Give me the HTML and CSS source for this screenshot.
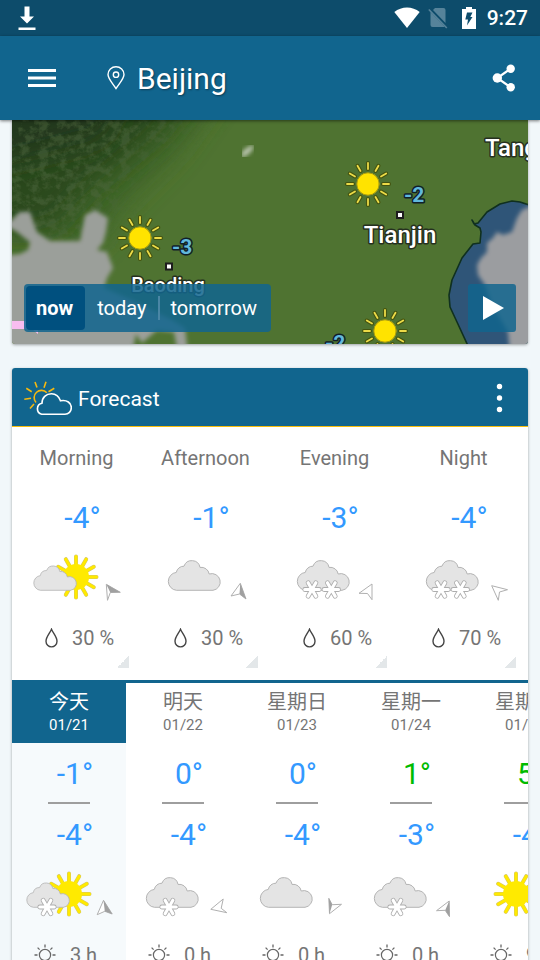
FILE: index.html
```html
<!DOCTYPE html>
<html lang="en">
<head>
<meta charset="utf-8">
<meta name="viewport" content="width=device-width, initial-scale=1">
<title>Beijing</title>
<link rel="stylesheet" href="styles.css">
</head>
<body>
<svg class="defs" width="0" height="0" aria-hidden="true">
  <defs>
    <path id="cloud" d="M19.5 38.3A9 9 0 0 1 19.3 20.4A7.6 7.6 0 0 1 27 14.2A8.3 8.3 0 0 1 43 15.4A8 8 0 0 1 52.2 22A8.4 8.4 0 1 1 56 38.3Z" fill="#e4e4e4" stroke="#b4b4b4"/>
    <use id="small-cloud" href="#cloud" transform="translate(-3.5 6.9) scale(.82)"/>
    <path id="rays" d="M0-11V-20.5M0 11V20.5M-11 0H-20.5M11 0H20.5M5.5-9.5L10.2-17.8M-5.5-9.5L-10.2-17.8M5.5 9.5L10.2 17.8M-5.5 9.5L-10.2 17.8M9.5-5.5L17.8-10.2M-9.5-5.5L-17.8-10.2M9.5 5.5L17.8 10.2M-9.5 5.5L-17.8 10.2"/>
    <g id="sun" stroke-linecap="round">
      <use href="#rays" stroke="#d3c56a" stroke-width="4"/>
      <circle r="13" fill="#ffea00"/>
      <use href="#rays" stroke="#ffea00" stroke-width="3"/>
    </g>
    <path id="arms" d="M-7.2 0H7.2M-3.9-6.7L3.9 6.7M3.9-6.7L-3.9 6.7"/>
    <g id="flake">
      <use href="#arms" stroke="#adadad" stroke-width="4.8" stroke-linecap="round"/>
      <use href="#arms" stroke="#fff" stroke-width="3.2" stroke-linecap="round"/>
    </g>
    <symbol id="drop" viewBox="0 0 13 20">
      <path d="M6.5 1.2C8 5 12 8.8 12 13.2A5.5 5.7 0 0 1 1 13.2C1 8.8 5 5 6.5 1.2Z" fill="none" stroke="#444" stroke-width="1.4"/>
    </symbol>
    <symbol id="hours" viewBox="0 0 22 22">
      <circle cx="11" cy="11" r="5.6" fill="none" stroke="#666" stroke-width="1.2"/>
      <path d="M11 .5V3.5M11 18.5V21.5M.5 11H3.5M18.5 11H21.5M3.6 3.6L5.6 5.6M16.4 16.4L18.4 18.4M18.4 3.6L16.4 5.6M3.6 18.4L5.6 16.4" stroke="#666" stroke-width="1.3"/>
    </symbol>
    <path id="map-rays" d="M0-15V-21M0 15V21M-15 0H-21M15 0H21M7.5-13L10.5-18.2M-7.5-13L-10.5-18.2M7.5 13L10.5 18.2M-7.5 13L-10.5 18.2M13-7.5L18.2-10.5M-13-7.5L-18.2-10.5M13 7.5L18.2 10.5M-13 7.5L-18.2 10.5"/>
    <g id="map-sun" stroke-linecap="round">
      <use href="#map-rays" stroke="#44540f" stroke-width="4"/>
      <use href="#map-rays" stroke="#ecdb48" stroke-width="1.8"/>
      <circle r="11.2" fill="#ffe300" stroke="#a99b10"/>
    </g>
  </defs>
</svg>

<div class="screen">
  <div class="status">
    <svg width="18" height="24" viewBox="0 0 18 24" fill="#fff"><path d="M6.5 .5H11.500V10.500H16L9 17.500L2 10.500H6.500ZM.5 21.500H17.500V24H.5Z"/></svg>
    <div class="status-right">
      <svg width="26" height="22" viewBox="0 0 26 22"><path d="M.3 5C7.500-1 18.500-1 25.700 5L13 21Z" fill="#fff"/></svg>
      <svg class="sim" width="20" height="22" viewBox="0 0 20 22"><path d="M7 1H15.500Q17.500 1 17.500 3V16L5 3ZM2.500 5L16.500 19.500Q16 20 15.500 20H4.500Q2.500 20 2.500 18Z" fill="#56839a"/><path d="M.8 2.500L18.800 21" stroke="#56839a" stroke-width="1.600"/></svg>
      <svg class="battery" width="14" height="22" viewBox="0 0 14 22"><path d="M4 0H10V2H14V22H0V2H4Z" fill="#fff"/><path d="M5 5.500H10.500L8.300 10H10.500L5 18.500L6 12.500H3.300Z" fill="#0d4c6b"/></svg>
      <span class="clock">9:27</span>
    </div>
  </div>

  <header class="appbar">
    <button class="icon-btn" aria-label="Menu"><svg width="28" height="18" viewBox="0 0 28 18" fill="#fff"><path d="M0 0H28V3H0ZM0 7.500H28V10.500H0ZM0 15H28V18H0Z"/></svg></button>
    <div class="place">
      <svg width="18" height="24" viewBox="0 0 18 24" fill="none" stroke="#fff" stroke-width="1.400"><path d="M9 22.500C5 16.500 1 12.500 1 8.500A8 7.800 0 0 1 17 8.500C17 12.500 13 16.500 9 22.500Z"/><circle cx="9" cy="8.700" r="2.700"/></svg>
      <h1>Beijing</h1>
    </div>
    <button class="icon-btn share" aria-label="Share"><svg width="24" height="28" viewBox="0 0 24 28"><path d="M18.700 4.700L5.300 14L18.700 23.300" fill="none" stroke="#fff" stroke-width="2.200"/><g fill="#fff"><circle cx="18.700" cy="4.700" r="4.200"/><circle cx="5.300" cy="14" r="4.700"/><circle cx="18.700" cy="23.300" r="4.200"/></g></svg></button>
  </header>

  <main>
    <section class="card map">
      <svg class="map-art" viewBox="0 0 516 224" preserveAspectRatio="xMidYMid slice">
        <defs>
          <filter id="soft" x="-10%" y="-10%" width="120%" height="120%"><feGaussianBlur stdDeviation="2.2"/></filter>
          <filter id="haze" x="-30%" y="-30%" width="160%" height="160%"><feGaussianBlur stdDeviation="14"/></filter>
          <filter id="grain" x="-20%" y="-20%" width="140%" height="140%">
            <feGaussianBlur in="SourceGraphic" stdDeviation="14" result="area"/>
            <feTurbulence type="fractalNoise" baseFrequency=".11 .13" numOctaves="5" seed="9"/>
            <feColorMatrix values="0 0 0 0 .08  0 0 0 0 .14  0 0 0 0 .05  0 0 0 4 -1.7"/>
            <feComposite in2="area" operator="in"/>
          </filter>
        </defs>
        <rect width="516" height="224" fill="#4f7331"/>
        <path d="M-40-40H215L165 30L135 60L110 85L85 125H-40Z" fill="#3c6427" filter="url(#haze)"/>
        <path d="M-40-40H190L145 14L110 42L75 70L40 110H-40Z" fill="#2c4a1d" filter="url(#haze)"/>
        <path d="M-40-40H120L90 18L30 34L-40 50Z" fill="#22391a" filter="url(#haze)"/>
        <path d="M-20-20H200L155 25L118 55L100 95L80 120H-20Z" filter="url(#grain)" opacity=".5"/>
        <path d="M231 33L234 30L241 26L237 32L231 36Z" fill="#b9c4ae" stroke="#b9c4ae" stroke-width="3" filter="url(#soft)"/>
        <path d="M-9 104L0 100L8 92L18 92L25 112L38 121H68L73 95L83 90L96 98L94 112L91 123L85 130L95 132L101 148L95 158L92 168L120 180L160 200L173 208L176 234H166L162 212L145 210L130 223L124 214L120 234H-9V136L8 134L16 130L18 122L5 112Z" fill="#9b9f9a" filter="url(#soft)"/>
        <path d="M0 201H26V214L20 209H0Z" fill="#f8bdf0"/>
        <path d="M520 86L508 82L500 81L488 84L475 92L466 103L462 104L460 100L463 105L468 108L469 112L468 123L461 124L450 138L440 160L437 175L438 187L445 202L457 228H520Z" fill="#2f5578" stroke="#10301f" stroke-width="1.6" stroke-linejoin="round"/>
        <path d="M525 84L510 90L505 98L500 112L491 115L485 112L481 118L475 123V132L469 138L465 145L466 155L473 165L480 185L492 205L496 212L498 234H525Z" fill="#9b9da0" filter="url(#soft)"/>
        <use href="#map-sun" x="128" y="118"/>
        <use href="#map-sun" x="356" y="64"/>
        <use href="#map-sun" x="373" y="211"/>
        <g fill="#fff" stroke="#1d1d1d" stroke-width="2"><path d="M154 143.500H160V149.500H154ZM385 92H391V98H385Z"/></g>
        <g class="map-city">
          <text x="388" y="123" text-anchor="middle">Tianjin</text>
          <text x="473" y="36">Tang</text>
          <text class="minor" x="156" y="172" text-anchor="middle">Baoding</text>
        </g>
        <g class="map-temp">
          <text x="160" y="134">-3</text>
          <text x="392" y="82">-2</text>
          <text x="313" y="230">-2</text>
        </g>
      </svg>
      <div class="map-bar">
        <div class="segments">
          <button class="on">now</button>
          <button>today</button>
          <button>tomorrow</button>
        </div>
        <button class="play" aria-label="Play"><svg width="22" height="24" viewBox="0 0 22 24"><path d="M0 0L21 12L0 24Z" fill="#fff"/></svg></button>
      </div>
    </section>

    <section class="card">
      <div class="card-head">
        <svg width="48" height="38" viewBox="0 0 48 38" fill="none" stroke-width="1.6"><path stroke="#f6b90f" d="M12 23.500A7 7 0 1 1 22.800 13.800M11 3L13 8.500M22 2.700L20 8.700M30.300 9.300L24.500 12.700M2.300 9.300L7.700 12.700M.3 20.300L7 19.300M6 29.500L10 25"/><path stroke="#fff" d="M17.700 35.300A5.700 5.700 0 0 1 18 24.200C18 18.500 22 14.700 27.500 14.700C32 14.700 35 17.500 36.500 21.800C43 20.500 47.300 24 47.300 28.500C47.300 32.500 44.500 35.300 41 35.300Z"/></svg>
        <h2>Forecast</h2>
        <button class="icon-btn more" aria-label="More"><svg width="12" height="30" viewBox="0 0 12 30" fill="#fff"><circle cx="6.500" cy="3.500" r="2.700"/><circle cx="6.500" cy="15" r="2.700"/><circle cx="6.500" cy="26.500" r="2.700"/></svg></button>
      </div>

      <div class="periods">
        <div class="period">
          <h3>Morning</h3>
          <p class="temp">-4°</p>
          <svg class="weather" viewBox="0 0 97 54"><use href="#sun" x="48" y="25"/><use href="#small-cloud"/><path class="wind" d="M78.300 32.300L92.300 40.300L82.300 40.500L79.500 48.300Z"/><path class="wind-dark" d="M78.300 32.300L92.300 40.300L82.300 40.500Z"/></svg>
          <p class="detail"><svg width="13" height="20"><use href="#drop"/></svg>30 %</p>
        </div>
        <div class="period">
          <h3>Afternoon</h3>
          <p class="temp">-1°</p>
          <svg class="weather" viewBox="0 0 97 54"><use href="#cloud"/><path class="wind" d="M83.300 31.300L89 47L82.500 42L74 44Z"/><path class="wind-dark" d="M83.300 31.300L89 47L82.500 42Z"/></svg>
          <p class="detail"><svg width="13" height="20"><use href="#drop"/></svg>30 %</p>
        </div>
        <div class="period">
          <h3>Evening</h3>
          <p class="temp">-3°</p>
          <svg class="weather" viewBox="0 0 97 54"><use href="#cloud"/><use href="#flake" x="26" y="37.500"/><use href="#flake" x="45.300" y="37.500"/><path class="wind" d="M86 32V47.700L81.500 41.500L73 41.300Z"/></svg>
          <p class="detail"><svg width="13" height="20"><use href="#drop"/></svg>60 %</p>
        </div>
        <div class="period">
          <h3>Night</h3>
          <p class="temp">-4°</p>
          <svg class="weather" viewBox="0 0 97 54"><use href="#cloud"/><use href="#flake" x="26" y="37.500"/><use href="#flake" x="45.300" y="37.500"/><path class="wind" d="M76.700 33.700L92.500 37.700L84.500 40L83.300 48.300Z"/></svg>
          <p class="detail"><svg width="13" height="20"><use href="#drop"/></svg>70 %</p>
        </div>
      </div>

      <div class="days">
        <div class="day today">
          <div class="day-head"><h3>今天</h3><time>01/21</time></div>
          <p class="temp">-1°</p><hr><p class="temp">-4°</p>
          <svg class="weather" viewBox="0 0 97 54"><use href="#sun" x="48" y="25"/><use href="#small-cloud"/><use href="#flake" x="26" y="38"/><path class="wind" d="M82.500 31.300L91.200 45L83.800 42.300L76.200 45.700Z"/><path class="wind-dark" d="M82.500 31.300L91.200 45L83.800 42.300Z"/></svg>
          <p class="detail"><svg width="22" height="22"><use href="#hours"/></svg>3 h</p>
        </div>
        <div class="day">
          <div class="day-head"><h3>明天</h3><time>01/22</time></div>
          <p class="temp">0°</p><hr><p class="temp">-4°</p>
          <svg class="weather" viewBox="0 0 97 54"><use href="#cloud"/><use href="#flake" x="34" y="38"/><path class="wind" d="M88.200 30L86.200 39.300L91.800 43.700L75.800 40.300Z"/></svg>
          <p class="detail"><svg width="22" height="22"><use href="#hours"/></svg>0 h</p>
        </div>
        <div class="day">
          <div class="day-head"><h3>星期日</h3><time>01/23</time></div>
          <p class="temp">0°</p><hr><p class="temp">-4°</p>
          <svg class="weather" viewBox="0 0 97 54"><use href="#cloud"/><path class="wind" d="M79.800 29.300L83.200 35.700L92.500 35.300L80.500 44.700Z"/><path class="wind-dark" d="M79.800 29.300L83.200 35.700L80.500 44.700Z"/></svg>
          <p class="detail"><svg width="22" height="22"><use href="#hours"/></svg>0 h</p>
        </div>
        <div class="day">
          <div class="day-head"><h3>星期一</h3><time>01/24</time></div>
          <p class="temp warm">1°</p><hr><p class="temp">-3°</p>
          <svg class="weather" viewBox="0 0 97 54"><use href="#cloud"/><use href="#flake" x="34" y="38"/><path class="wind" d="M86.200 32L86.500 47.700L82.200 41.300L73.500 41.700Z"/><path class="wind-dark" d="M86.200 32L86.500 47.700L82.200 41.300Z"/></svg>
          <p class="detail"><svg width="22" height="22"><use href="#hours"/></svg>0 h</p>
        </div>
        <div class="day">
          <div class="day-head"><h3>星期二</h3><time>01/25</time></div>
          <p class="temp warm">5°</p><hr><p class="temp">-4°</p>
          <svg class="weather" viewBox="0 0 97 54"><use href="#sun" x="39" y="25"/></svg>
          <p class="detail"><svg width="22" height="22"><use href="#hours"/></svg>9 h</p>
        </div>
      </div>
    </section>
  </main>
</div>
</body>
</html>
```

FILE: styles.css
```css
* { box-sizing: border-box; }

body {
  margin: 0;
  background: #f1f7fa;
  font-family: Roboto, "Noto Sans CJK SC", sans-serif;
  font-size: 20px;
  line-height: 24px;
  color: #757575;
}

h1, h2, h3, p { margin: 0; font-size: 20px; font-weight: 400; }

button {
  border: 0;
  padding: 0;
  background: none;
  color: #fff;
  font: inherit;
}

svg { display: block; flex: none; }
.defs { position: absolute; }

.screen {
  display: flex;
  flex-direction: column;
  height: 100vh;
  overflow: hidden;
}

/* Status bar */
.status {
  display: flex;
  flex: none;
  align-items: center;
  justify-content: space-between;
  height: 36px;
  padding: 0 12px 0 18px;
  background: #0d4c6b;
}

.status-right { display: flex; align-items: center; }
.sim { margin-left: 8px; }
.battery { margin: 0 11px 0 14px; }
.clock { color: #fff; font-size: 21px; font-weight: 500; }

/* App bar */
.appbar {
  position: relative;
  z-index: 1;
  display: flex;
  flex: none;
  align-items: center;
  gap: 51px;
  height: 84px;
  padding: 0 24px 0 28px;
  background: #11658e;
  box-shadow: 0 1px 3px rgba(0, 0, 0, .5);
}

.place { display: flex; align-items: center; gap: 12px; }

h1 {
  padding-top: 2px;
  color: #fff;
  font-size: 30px;
  line-height: 36px;
  text-shadow: 1px 1px 2px rgba(0, 0, 0, .4);
}

.share { margin-left: auto; }

/* Cards */
main {
  display: flex;
  flex: 1;
  flex-direction: column;
  gap: 24px;
  min-height: 0;
  padding: 0 12px;
}

.card {
  flex: none;
  overflow: hidden;
  border-radius: 3px;
  background: #fff;
  box-shadow: 0 1px 3px rgba(0, 0, 0, .35);
}

.map { position: relative; border-radius: 0 0 3px 3px; }
.map-art { width: 100%; height: 224px; }

.map-city text, .map-temp text {
  paint-order: stroke;
  stroke: #26301f;
  stroke-width: 3px;
  stroke-linejoin: round;
  font-weight: 500;
}

.map-city text { fill: #fff; font-size: 24px; }
.map-city .minor { font-size: 20px; }
.map-temp text { fill: #62b8dc; stroke: #10202a; font-size: 21px; font-weight: 700; }

.map-bar {
  position: absolute;
  right: 12px;
  bottom: 12px;
  left: 12px;
  display: flex;
  justify-content: space-between;
}

.segments {
  display: flex;
  align-items: center;
  height: 48px;
  padding: 2px;
  border-radius: 4px;
  background: rgba(17, 101, 142, .86);
}

.segments button { padding: 0 12px; }
.segments button:last-child { border-left: 2px solid #4a86a5; padding-left: 10px; }

.segments .on {
  align-self: stretch;
  padding: 0 12px 0 10px;
  border-radius: 4px;
  background: #00507f;
  font-weight: 700;
}

.play {
  display: flex;
  align-items: center;
  width: 48px;
  height: 48px;
  padding-left: 15px;
  border-radius: 3px;
  background: rgba(17, 101, 142, .84);
}

.card-head {
  display: flex;
  align-items: center;
  gap: 6px;
  height: 59px;
  padding: 2px 23px 0 12px;
  border-bottom: 1px solid #f8bd0b;
  background: #11658e;
}

h2 { padding-top: 2px; color: #fff; font-size: 21px; }
.more { margin-left: auto; }

/* Forecast by time of day */
.periods {
  display: grid;
  grid-template-columns: repeat(4, 1fr);
  padding: 19px 0 12px;
}

.period, .day { display: flex; flex-direction: column; align-items: center; }
.period { position: relative; padding-bottom: 18px; }

.period::after {
  content: "";
  position: absolute;
  right: 12px;
  bottom: 0;
  width: 12px;
  height: 12px;
  background: linear-gradient(135deg, transparent 50%, #e3e7e9 50%);
}

.temp {
  padding-left: 12px;
  color: #3399ff;
  font-size: 30px;
  line-height: 36px;
}

.warm { color: #00bb00; }
.period .temp { margin: 30px 0 16px; }
.weather { width: 97px; height: 54px; overflow: visible; }
.wind { fill: #fff; stroke: #b0b0b0; stroke-width: 1px; }
.wind-dark { fill: #a0a0a0; }
.detail { display: flex; align-items: center; gap: 14px; }
.period .detail { margin-top: 20px; padding-left: 6px; }

/* Forecast by day */
.days { display: flex; overflow: hidden; border-top: 3px solid #11658e; }
.day { flex: none; width: 114px; padding-bottom: 24px; }
.today { background: #f6fafc; }

.day-head {
  align-self: stretch;
  height: 60px;
  padding-top: 7px;
  text-align: center;
}

.today .day-head { background: #11658e; color: #fff; }
.day-head time { display: block; font-size: 15px; line-height: 22px; }
.day .temp { margin-top: 13px; }

hr {
  width: 42px;
  height: 2px;
  margin: 10px 0 0;
  border: 0;
  background: #9e9e9e;
}

.day .weather { margin-top: 16px; }
.day .detail { margin-top: 20px; padding-right: 7px; }
```
